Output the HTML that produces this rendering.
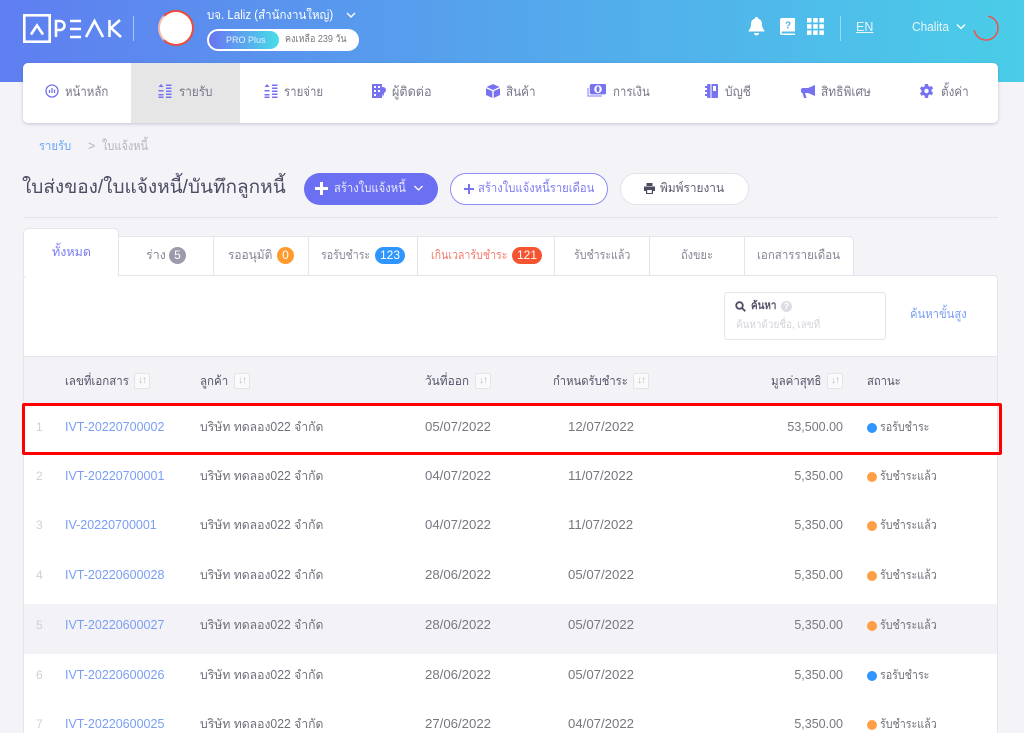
<!DOCTYPE html>
<html lang="th"><head><meta charset="utf-8"><title>PEAK</title>
<style>
html,body{margin:0;padding:0;width:1024px;height:733px;overflow:hidden}
body{font-family:"Liberation Sans","Noto Sans CJK SC",sans-serif;font-size:13px;color:#6f6f7b}
#p{position:relative;width:1024px;height:733px;overflow:hidden;background:#f3f3f8}
.a,.t{position:absolute}
.t{white-space:nowrap;line-height:18px;transform-origin:0 50%}
.x85{transform:scaleX(.85)}.x88{transform:scaleX(.88)}.x90{transform:scaleX(.9)}.x92{transform:scaleX(.92)}.x95{transform:scaleX(.95)}.x97{transform:scaleX(.97)}
svg{position:absolute;display:block}
.hd{left:0;top:0;width:1024px;height:82px;background:linear-gradient(90deg,#5f7ef0,#4acde8)}
.nav{left:23px;top:63px;width:975px;height:60px;background:#fff;border-radius:5px;box-shadow:0 1px 3px rgba(60,60,90,.25);overflow:hidden}
.nt{color:#77778a;font-size:13px;top:83px}
.tab{position:absolute;top:236px;height:38px;background:#fff;border:1px solid #e4e4ec;border-left:0}
.tt{top:246px;color:#858594;font-size:12.5px}
.bdg{position:absolute;top:247px;height:17px;border-radius:9px;line-height:17px;color:#fff;font-size:12px;text-align:center}
.sort{position:absolute;top:373px;width:14px;height:14px;border:1px solid #e3e3e8;border-radius:2px;background:#fafafb;color:#bcbcc4;font-size:10px;line-height:14px;text-align:center;letter-spacing:-1px}
.h{font-size:12.5px;color:#54546a;top:372px}
.n{left:36px;color:#cfcfd4;font-size:12px}
.id{left:65px;color:#7a9ef5;font-size:12.5px}
.c{left:200px;color:#6f6f7b;font-size:12.5px;transform:scaleX(.975)}
.d1{left:425px;color:#77777f;font-size:13.2px}
.d2{left:568px;color:#77777f;font-size:13.2px}
.v{left:743px;width:100px;text-align:right;color:#77777f;font-size:12.5px}
.s{left:880px;color:#6f6f7b;font-size:12.5px;transform:scaleX(.855)}
.dot{position:absolute;left:867px;width:10px;height:10px;border-radius:50%}
</style></head><body><div id="p">
<div class="a hd"></div>

<svg style="left:23px;top:14px" width="100" height="30" viewBox="0 0 100 30" fill="none" stroke="#fff" stroke-width="2.600">
<rect x="1.300" y="1.300" width="25.400" height="26.400"/><path d="M8 20.500 14 11.500 20 20.500"/>
<path d="M33 23V7h4a4.500 4.500 0 0 1 0 9h-4"/><path d="M47 7h11M47 15h11M47 23h11"/><path d="M63 23 71.500 7 80 23"/><path d="M86.500 6V23M97 6 88 14 98 23"/></svg>
<div class="a" style="left:133px;top:16px;width:1px;height:25px;background:#a9c4f5"></div>
<div class="a" style="left:158px;top:10px;width:36px;height:36px;border-radius:50%;background:#fff;box-sizing:border-box;border:2px solid #ee4a3c;border-left-color:#f5b7ae"></div>
<div class="t x92" style="left:207px;top:6px;color:#fff;font-size:12.5px">บจ. Laliz (สำนักงานใหญ่)</div>
<svg style="left:345px;top:11px" width="12" height="8" fill="none" stroke="#fff" stroke-width="1.400"><path d="M2 2l4 4 4-4"/></svg>
<div class="a" style="left:207px;top:29px;width:152px;height:22px;border-radius:11px;background:#fff"></div>
<div class="a" style="left:209px;top:31px;width:70px;height:18px;border-radius:9px;background:linear-gradient(90deg,#6a74f3,#47dde6)"></div>
<div class="t" style="left:226px;top:31px;color:#e8efff;font-size:9px">PRO Plus</div>
<div class="t x90" style="left:285px;top:31px;color:#77777f;font-size:10px">คงเหลือ 239 วัน</div>

<svg style="left:748px;top:17px" width="17" height="19" viewBox="0 0 17 19" fill="#fff"><path d="M8.500 0a1.500 1.500 0 0 1 1.500 1.600c2.600.6 4 2.700 4 5.400 0 3.500 1 4.800 2.300 6.200v1.300H.7v-1.300C2 11.800 3 10.500 3 7c0-2.700 1.400-4.800 4-5.400A1.500 1.500 0 0 1 8.500 0zM6 16h5a2.500 2.500 0 0 1-5 0z"/></svg>
<svg style="left:780px;top:18px" width="15" height="18" viewBox="0 0 15 18"><path fill="#fff" d="M2 0h13v13.500H2.500a1 1 0 0 0 0 2H15V17H2a2 2 0 0 1-2-2V2a2 2 0 0 1 2-2z"/><text x="5" y="10.500" font-size="10" font-weight="700" fill="#57b0ea" font-family="Liberation Sans">?</text></svg>
<svg style="left:807px;top:18px" width="17" height="17" fill="#fff"><rect width="4.500" height="4.500"/><rect x="6.200" width="4.500" height="4.500"/><rect x="12.400" width="4.500" height="4.500"/><rect y="6.200" width="4.500" height="4.500"/><rect x="6.200" y="6.200" width="4.500" height="4.500"/><rect x="12.400" y="6.200" width="4.500" height="4.500"/><rect y="12.400" width="4.500" height="4.500"/><rect x="6.200" y="12.400" width="4.500" height="4.500"/><rect x="12.400" y="12.400" width="4.500" height="4.500"/></svg>
<div class="a" style="left:840px;top:16px;width:1px;height:25px;background:#9fdcf0"></div>
<div class="t" style="left:856px;top:18px;color:#e8f6fc;font-size:12.500px;text-decoration:underline">EN</div>
<div class="t x95" style="left:912px;top:18px;color:#e8f6fc;font-size:12.500px">Chalita</div>
<svg style="left:955px;top:23px" width="12" height="8" fill="none" stroke="#fff" stroke-width="1.400"><path d="M2 1.500l4 4 4-4"/></svg>
<svg style="left:973px;top:15px" width="26" height="26" fill="none"><circle cx="13" cy="13" r="12" stroke="#ee5347" stroke-width="1.500" stroke-dasharray="52 24" transform="rotate(-80 13 13)"/></svg>

<div class="a nav"><div class="a" style="left:108px;top:0;width:109px;height:60px;background:#e6e6e6"></div></div>
<svg style="left:45px;top:84px" width="14" height="14" fill="none" stroke="#7672f2" stroke-width="1.300"><circle cx="7" cy="7" r="6"/><path d="M4.500 6v3M7 4v5M9.500 5.500V9"/></svg>
<div class="t nt x88" style="left:65px">หน้าหลัก</div>
<svg style="left:158px;top:84px" width="14" height="15" fill="#7672f2"><path d="M3 0l2.500 3h-5zM.5 6h5v1.500h-5zM.5 10h5v1.500h-5zM.5 12.500h5V14h-5z"/><path d="M8 .5h5.500v1.500H8zM8 3.500h5.500V5H8zM8 6.500h5.500V8H8zM8 9.500h5.500V11H8zM8 12.500h5.500V14H8z"/></svg>
<div class="t nt x90" style="left:179px">รายรับ</div>
<svg style="left:264px;top:84px" width="14" height="15" fill="#7672f2"><path d="M3 0l2.500 3h-5zM.5 6h5v1.500h-5zM.5 10h5v1.500h-5zM.5 12.500h5V14h-5z"/><path d="M8 .5h5.500v1.500H8zM8 3.500h5.500V5H8zM8 6.500h5.500V8H8zM8 9.500h5.500V11H8zM8 12.500h5.500V14H8z"/></svg>
<div class="t nt x88" style="left:284px">รายจ่าย</div>
<svg style="left:372px;top:84px" width="14" height="14" fill="#7672f2"><path d="M0 0h10v14H0z"/><circle cx="11" cy="6" r="3"/><path d="M9.500 8h3L11 13z"/><g fill="#fff"><rect x="2" y="2" width="2" height="2"/><rect x="6" y="2" width="2" height="2"/><rect x="2" y="6" width="2" height="2"/><rect x="6" y="6" width="2" height="2"/><rect x="2" y="10" width="2" height="2"/></g></svg>
<div class="t nt x97" style="left:392px">ผู้ติดต่อ</div>
<svg style="left:486px;top:84px" width="14" height="14" fill="#7672f2"><path d="M7 0l6.500 3L7 6 .5 3zM0 4.200l6.300 2.900V14L0 11zM14 4.200 7.700 7.100V14l6.300-3z"/></svg>
<div class="t nt x90" style="left:506px">สินค้า</div>
<svg style="left:587px;top:84px" width="19" height="14" fill="none"><rect x="3.500" y=".7" width="15" height="9" rx="1" stroke="#7672f2" stroke-width="1.400" fill="#7672f2"/><ellipse cx="11" cy="5.200" rx="3.800" ry="4" fill="#fff"/><ellipse cx="11" cy="5.200" rx="1.500" ry="3" fill="#7672f2"/><path d="M1 4v8h14" stroke="#a9a7f7" stroke-width="1.500"/></svg>
<div class="t nt x88" style="left:613px">การเงิน</div>
<svg style="left:705px;top:84px" width="13" height="15" fill="#7672f2"><rect x="2" width="11" height="14" rx="1"/><path d="M0 2h2v2H0zM0 6h2v2H0zM0 10h2v2H0z"/><rect x="5.500" y="0" width="1" height="14" fill="#fff"/><rect x="8" y="2" width="3" height="5" fill="#fff"/></svg>
<div class="t nt x92" style="left:725px">บัญชี</div>
<svg style="left:801px;top:85px" width="14" height="13" fill="#7672f2"><path d="M14 0v11L7 8H4L5.500 13H3L1.500 8C.5 8 0 7 0 6V5c0-1 .7-2 2-2h5z"/></svg>
<div class="t nt x92" style="left:821px">สิทธิพิเศษ</div>
<svg style="left:920px;top:84px" width="13" height="14" viewBox="0 0 13 14"><path fill="#7672f2" d="M5 0h3l.4 2 1.500.8L11.800 2l1.200 2.500-1.500 1.300v1.600l1.500 1.300-1.200 2.500-1.900-.8-1.500.8L8 14H5l-.4-2.200-1.500-.8-1.900.8L0 9.300l1.500-1.300V6.200L0 4.900 1.200 2.400l1.900.8 1.500-.9z"/><circle cx="6.500" cy="7" r="2.200" fill="#fff"/></svg>
<div class="t nt x90" style="left:941px">ตั้งค่า</div>

<div class="t x90" style="left:39px;top:137px;color:#6aa8f8;font-size:12.500px">รายรับ</div>
<div class="t" style="left:88px;top:137px;color:#b4b4bc;font-size:12.500px">&gt;</div>
<div class="t x88" style="left:102px;top:137px;color:#b4b4bc;font-size:12.500px">ใบแจ้งหนี้</div>

<div class="t" style="left:22px;top:175px;color:#4c4c63;font-size:19px;line-height:26px">ใบส่งของ/ใบแจ้งหนี้/บันทึกลูกหนี้</div>
<div class="a" style="left:304px;top:173px;width:134px;height:32px;border-radius:16px;background:#6b6ff1"></div>
<svg style="left:315px;top:182px" width="13" height="13" fill="#fff"><path d="M5 0h3v5h5v3H8v5H5V8H0V5h5z"/></svg>
<div class="t x90" style="left:334px;top:179px;color:#e8e8ff;font-size:12.500px">สร้างใบแจ้งหนี้</div>
<svg style="left:413px;top:185px" width="11" height="7" fill="none" stroke="#fff" stroke-width="1.300"><path d="M1.500 1l4 4 4-4"/></svg>
<div class="a" style="left:450px;top:173px;width:158px;height:32px;box-sizing:border-box;border-radius:16px;background:#fff;border:1px solid #8d8df5"></div>
<svg style="left:464px;top:184px" width="10" height="10" fill="#7672f2"><path d="M4 0h2v4h4v2H6v4H4V6H0V4h4z"/></svg>
<div class="t x90" style="left:478px;top:179px;color:#7d7cf0;font-size:12.500px">สร้างใบแจ้งหนี้รายเดือน</div>
<div class="a" style="left:620px;top:173px;width:129px;height:32px;box-sizing:border-box;border-radius:16px;background:#fff;border:1px solid #e3e3ea"></div>
<svg style="left:644px;top:183px" width="11" height="11" fill="#4c4c63"><path d="M2.500 0h6v3h-6zM0 3.500h11V8H9v3H2V8H0z"/><rect x="3.200" y="7" width="4.600" height="3" fill="#fff"/></svg>
<div class="t x95" style="left:660px;top:179px;color:#5c5c70;font-size:12.500px">พิมพ์รายงาน</div>
<div class="a" style="left:23px;top:217px;width:975px;height:1px;background:#e4e4ea"></div>

<div class="a" style="left:23px;top:275px;width:975px;height:458px;background:#fff;border:1px solid #e4e4ec;border-bottom:0;box-sizing:border-box;border-radius:4px 4px 0 0"></div>
<div class="a" style="left:23px;top:228px;width:96px;height:48px;box-sizing:border-box;background:#fff;border:1px solid #e4e4ec;border-bottom:0;border-radius:5px 5px 0 0"></div>
<div class="t" style="left:52px;top:243px;color:#7c7cf3;font-size:12.500px">ทั้งหมด</div>
<div class="tab" style="left:119px;width:94px"></div>
<div class="tab" style="left:214px;width:94px"></div>
<div class="tab" style="left:309px;width:108px"></div>
<div class="tab" style="left:418px;width:136px"></div>
<div class="tab" style="left:555px;width:94px"></div>
<div class="tab" style="left:650px;width:94px"></div>
<div class="tab" style="left:745px;width:108px;border-radius:0 5px 0 0"></div>
<div class="t tt" style="left:146px">ร่าง</div><div class="bdg" style="left:169px;width:17px;border-radius:50%;background:#9b9bab">5</div>
<div class="t tt x95" style="left:228px">รออนุมัติ</div><div class="bdg" style="left:277px;width:17px;border-radius:50%;background:#ff9a2e">0</div>
<div class="t tt x85" style="left:321px">รอรับชำระ</div><div class="bdg" style="left:375px;width:30px;background:#2f96ff">123</div>
<div class="t tt x85" style="left:431px;color:#f5796a">เกินเวลารับชำระ</div><div class="bdg" style="left:512px;width:30px;background:#f55430">121</div>
<div class="t tt x85" style="left:574px">รับชำระแล้ว</div>
<div class="t tt x88" style="left:681px">ถังขยะ</div>
<div class="t tt x92" style="left:757px">เอกสารรายเดือน</div>

<div class="a" style="left:724px;top:292px;width:162px;height:48px;box-sizing:border-box;border:1px solid #e4e4ec;border-radius:3px;background:#fff"></div>
<svg style="left:735px;top:301px" width="11" height="11" fill="none" stroke="#4c4c63" stroke-width="1.800"><circle cx="4.500" cy="4.500" r="3.300"/><path d="M7 7l3.300 3.300"/></svg>
<div class="t x90" style="left:751px;top:297px;color:#55556a;font-size:11px;font-weight:700">ค้นหา</div>
<div class="a" style="left:781px;top:301px;width:11px;height:11px;border-radius:50%;background:#dcdce4;color:#fff;font-size:9px;line-height:11px;text-align:center;font-weight:700">?</div>
<div class="t x90" style="left:736px;top:316px;color:#d4d4da;font-size:11px">ค้นหาด้วยชื่อ, เลขที่</div>
<div class="t x90" style="left:910px;top:305px;color:#7a9ef5;font-size:12.500px">ค้นหาขั้นสูง</div>

<div class="a" style="left:24px;top:356px;width:973px;height:47px;background:#f3f3f7;border-top:1px solid #e4e4ec;box-sizing:border-box"></div>
<div class="a" style="left:24px;top:604px;width:973px;height:50px;background:#f3f3f7"></div>

<div class="t h x92" style="left:65px">เลขที่เอกสาร</div><div class="sort" style="left:134px">↓↑</div>
<div class="t h x92" style="left:200px">ลูกค้า</div><div class="sort" style="left:234px">↓↑</div>
<div class="t h x95" style="left:425px">วันที่ออก</div><div class="sort" style="left:475px">↓↑</div>
<div class="t h x90" style="left:553px">กำหนดรับชำระ</div><div class="sort" style="left:633px">↓↑</div>
<div class="t h x92" style="left:771px">มูลค่าสุทธิ</div><div class="sort" style="left:827px">↓↑</div>
<div class="t h x90" style="left:867px">สถานะ</div>

<div class="t n" style="top:418px">1</div><div class="t id" style="top:418px">IVT-20220700002</div><div class="t c" style="top:418px">บริษัท ทดลอง022 จำกัด</div><div class="t d1" style="top:418px">05/07/2022</div><div class="t d2" style="top:418px">12/07/2022</div><div class="t v" style="top:418px">53,500.00</div><div class="dot" style="top:423px;background:#2f96ff"></div><div class="t s" style="top:418px">รอรับชำระ</div>
<div class="t n" style="top:467px">2</div><div class="t id" style="top:467px">IVT-20220700001</div><div class="t c" style="top:467px">บริษัท ทดลอง022 จำกัด</div><div class="t d1" style="top:467px">04/07/2022</div><div class="t d2" style="top:467px">11/07/2022</div><div class="t v" style="top:467px">5,350.00</div><div class="dot" style="top:472px;background:#ff9f45"></div><div class="t s" style="top:467px">รับชำระแล้ว</div>
<div class="t n" style="top:516px">3</div><div class="t id" style="top:516px">IV-20220700001</div><div class="t c" style="top:516px">บริษัท ทดลอง022 จำกัด</div><div class="t d1" style="top:516px">04/07/2022</div><div class="t d2" style="top:516px">11/07/2022</div><div class="t v" style="top:516px">5,350.00</div><div class="dot" style="top:521px;background:#ff9f45"></div><div class="t s" style="top:516px">รับชำระแล้ว</div>
<div class="t n" style="top:566px">4</div><div class="t id" style="top:566px">IVT-20220600028</div><div class="t c" style="top:566px">บริษัท ทดลอง022 จำกัด</div><div class="t d1" style="top:566px">28/06/2022</div><div class="t d2" style="top:566px">05/07/2022</div><div class="t v" style="top:566px">5,350.00</div><div class="dot" style="top:571px;background:#ff9f45"></div><div class="t s" style="top:566px">รับชำระแล้ว</div>
<div class="t n" style="top:616px">5</div><div class="t id" style="top:616px">IVT-20220600027</div><div class="t c" style="top:616px">บริษัท ทดลอง022 จำกัด</div><div class="t d1" style="top:616px">28/06/2022</div><div class="t d2" style="top:616px">05/07/2022</div><div class="t v" style="top:616px">5,350.00</div><div class="dot" style="top:621px;background:#ff9f45"></div><div class="t s" style="top:616px">รับชำระแล้ว</div>
<div class="t n" style="top:666px">6</div><div class="t id" style="top:666px">IVT-20220600026</div><div class="t c" style="top:666px">บริษัท ทดลอง022 จำกัด</div><div class="t d1" style="top:666px">28/06/2022</div><div class="t d2" style="top:666px">05/07/2022</div><div class="t v" style="top:666px">5,350.00</div><div class="dot" style="top:671px;background:#2f96ff"></div><div class="t s" style="top:666px">รอรับชำระ</div>
<div class="t n" style="top:715px">7</div><div class="t id" style="top:715px">IVT-20220600025</div><div class="t c" style="top:715px">บริษัท ทดลอง022 จำกัด</div><div class="t d1" style="top:715px">27/06/2022</div><div class="t d2" style="top:715px">04/07/2022</div><div class="t v" style="top:715px">5,350.00</div><div class="dot" style="top:720px;background:#ff9f45"></div><div class="t s" style="top:715px">รับชำระแล้ว</div>

<div class="a" style="left:22px;top:403px;width:980px;height:52px;box-sizing:border-box;border:3px solid #f00;border-radius:2px"></div>
</div></body></html>
